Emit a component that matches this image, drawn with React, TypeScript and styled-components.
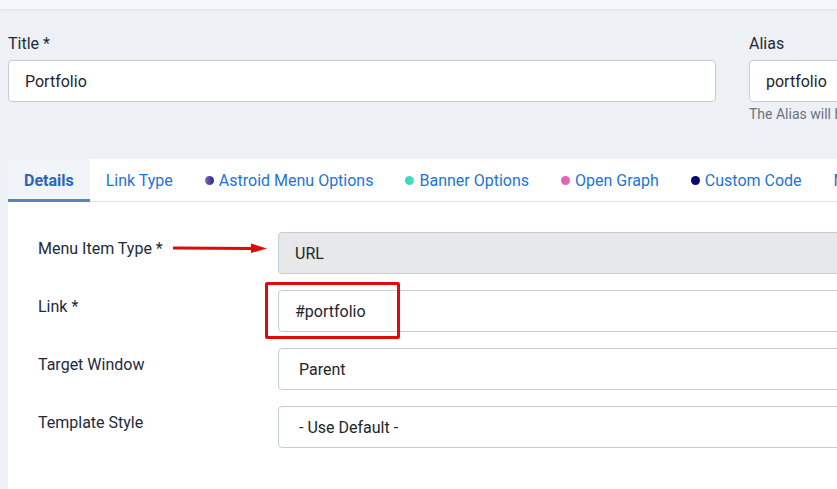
import styled, { createGlobalStyle } from "styled-components"

const GlobalStyle = createGlobalStyle`
  html, body {
    margin: 0;
    padding: 0;
    background: #edf1f6;
    overflow: hidden;
  }
  body {
    font-family: Roboto, "Liberation Sans", sans-serif;
    font-size: 16px;
    color: #1e2a3c;
  }
`

const Page = styled.div`
  width: 1200px;
  min-height: 489px;
`

const TopBar = styled.div`
  height: 9px;
  background: #f5f7fa;
  box-shadow: 0 1px 3px rgba(30, 50, 80, 0.08);
`

const Header = styled.div`
  display: grid;
  grid-template-columns: 708px 400px;
  column-gap: 33px;
  padding: 23px 8px 0;
`

const Field = styled.div`
  display: flex;
  flex-direction: column;
`

const Label = styled.label`
  font-size: 16px;
  line-height: 24px;
  color: #1e2a3c;
  margin-bottom: 4px;
`

const TextInput = styled.input<{ $disabled?: boolean; $select?: boolean }>`
  box-sizing: border-box;
  height: 42px;
  width: 100%;
  padding: 0 ${(p) => (p.$select ? "20px" : "16px")};
  font-family: inherit;
  font-size: 16px;
  color: #22262a;
  background: ${(p) => (p.$disabled ? "#e7e8e9" : "#fff")};
  border: 1px solid #c5ccd5;
  border-radius: 4px;
  outline: none;
`

const Help = styled.div`
  font-size: 14px;
  line-height: 20px;
  margin-top: 2px;
  color: #6b737c;
  white-space: nowrap;
`

const Panel = styled.div`
  margin: 35px 0 0 8px;
  background: #fff;
  min-height: 331px;
`

const Tabs = styled.div`
  display: flex;
  height: 43px;
  border-bottom: 1px solid #dfe3e8;
  box-sizing: border-box;
`

const Tab = styled.div<{ $active?: boolean }>`
  display: flex;
  align-items: center;
  gap: 5px;
  padding: 0 16px 1px;
  font-size: 16px;
  white-space: nowrap;
  color: ${(p) => (p.$active ? "#2b66b5" : "#2174d8")};
  font-weight: ${(p) => (p.$active ? 700 : 400)};
  background: ${(p) => (p.$active ? "#f1f4f8" : "transparent")};
  box-shadow: ${(p) => (p.$active ? "inset 0 -3px 0 #5a83bf" : "none")};
  margin-bottom: -1px;
`

const Dot = styled.span<{ $bg: string }>`
  width: 9px;
  height: 9px;
  border-radius: 50%;
  background: ${(p) => p.$bg};
`

const Body = styled.div`
  padding: 30px 0 0 30px;
  display: flex;
  flex-direction: column;
  gap: 16px;
  position: relative;
`

const Row = styled.div`
  display: grid;
  grid-template-columns: 240px 900px;
  align-items: start;
`

const RowLabel = styled.div`
  padding-top: 5px;
  line-height: 24px;
  font-size: 16px;
  color: #1e2a3c;
`

const Arrow = styled.svg`
  position: absolute;
  left: 157px;
  top: 40px;
`

const Highlight = styled.div`
  position: absolute;
  left: 257px;
  top: 80px;
  width: 135px;
  height: 57px;
  box-sizing: border-box;
  border: 3px solid #e10a0a;
  border-radius: 2px;
  pointer-events: none;
`

const tabs = [
  { label: "Details", active: true },
  { label: "Link Type" },
  { label: "Astroid Menu Options", dot: "linear-gradient(90deg, #7a6bd0, #2a2580)" },
  { label: "Banner Options", dot: "linear-gradient(90deg, #2fcfd8, #4de6a4)" },
  { label: "Open Graph", dot: "linear-gradient(90deg, #d964c8, #ef64a0)" },
  { label: "Custom Code", dot: "#07076e" },
  { label: "Metadata" },
]

const rows = [
  { label: "Menu Item Type *", value: "URL", disabled: true },
  { label: "Link *", value: "#portfolio" },
  { label: "Target Window", value: "Parent", select: true },
  { label: "Template Style", value: "- Use Default -", select: true },
]

export default function App() {
  return (
    <Page>
      <GlobalStyle />
      <TopBar />
      <Header>
        <Field>
          <Label>Title *</Label>
          <TextInput defaultValue="Portfolio" />
        </Field>
        <Field>
          <Label>Alias</Label>
          <TextInput defaultValue="portfolio" />
          <Help>The Alias will be used in the SEF URL.</Help>
        </Field>
      </Header>
      <Panel>
        <Tabs>
          {tabs.map((t) => (
            <Tab key={t.label} $active={t.active}>
              {t.dot && <Dot $bg={t.dot} />}
              {t.label}
            </Tab>
          ))}
        </Tabs>
        <Body>
          {rows.map((r) => (
            <Row key={r.label}>
              <RowLabel>{r.label}</RowLabel>
              <TextInput
                readOnly
                defaultValue={r.value}
                $disabled={r.disabled}
                $select={r.select}
              />
            </Row>
          ))}
          <Arrow width="104" height="12" viewBox="0 0 104 12">
            <line x1="8" y1="6" x2="88" y2="6.5" stroke="#e10a0a" strokeWidth="3" />
            <polygon points="86,1.5 102,6.5 86,11" fill="#e10a0a" />
          </Arrow>
          <Highlight />
        </Body>
      </Panel>
    </Page>
  )
}
